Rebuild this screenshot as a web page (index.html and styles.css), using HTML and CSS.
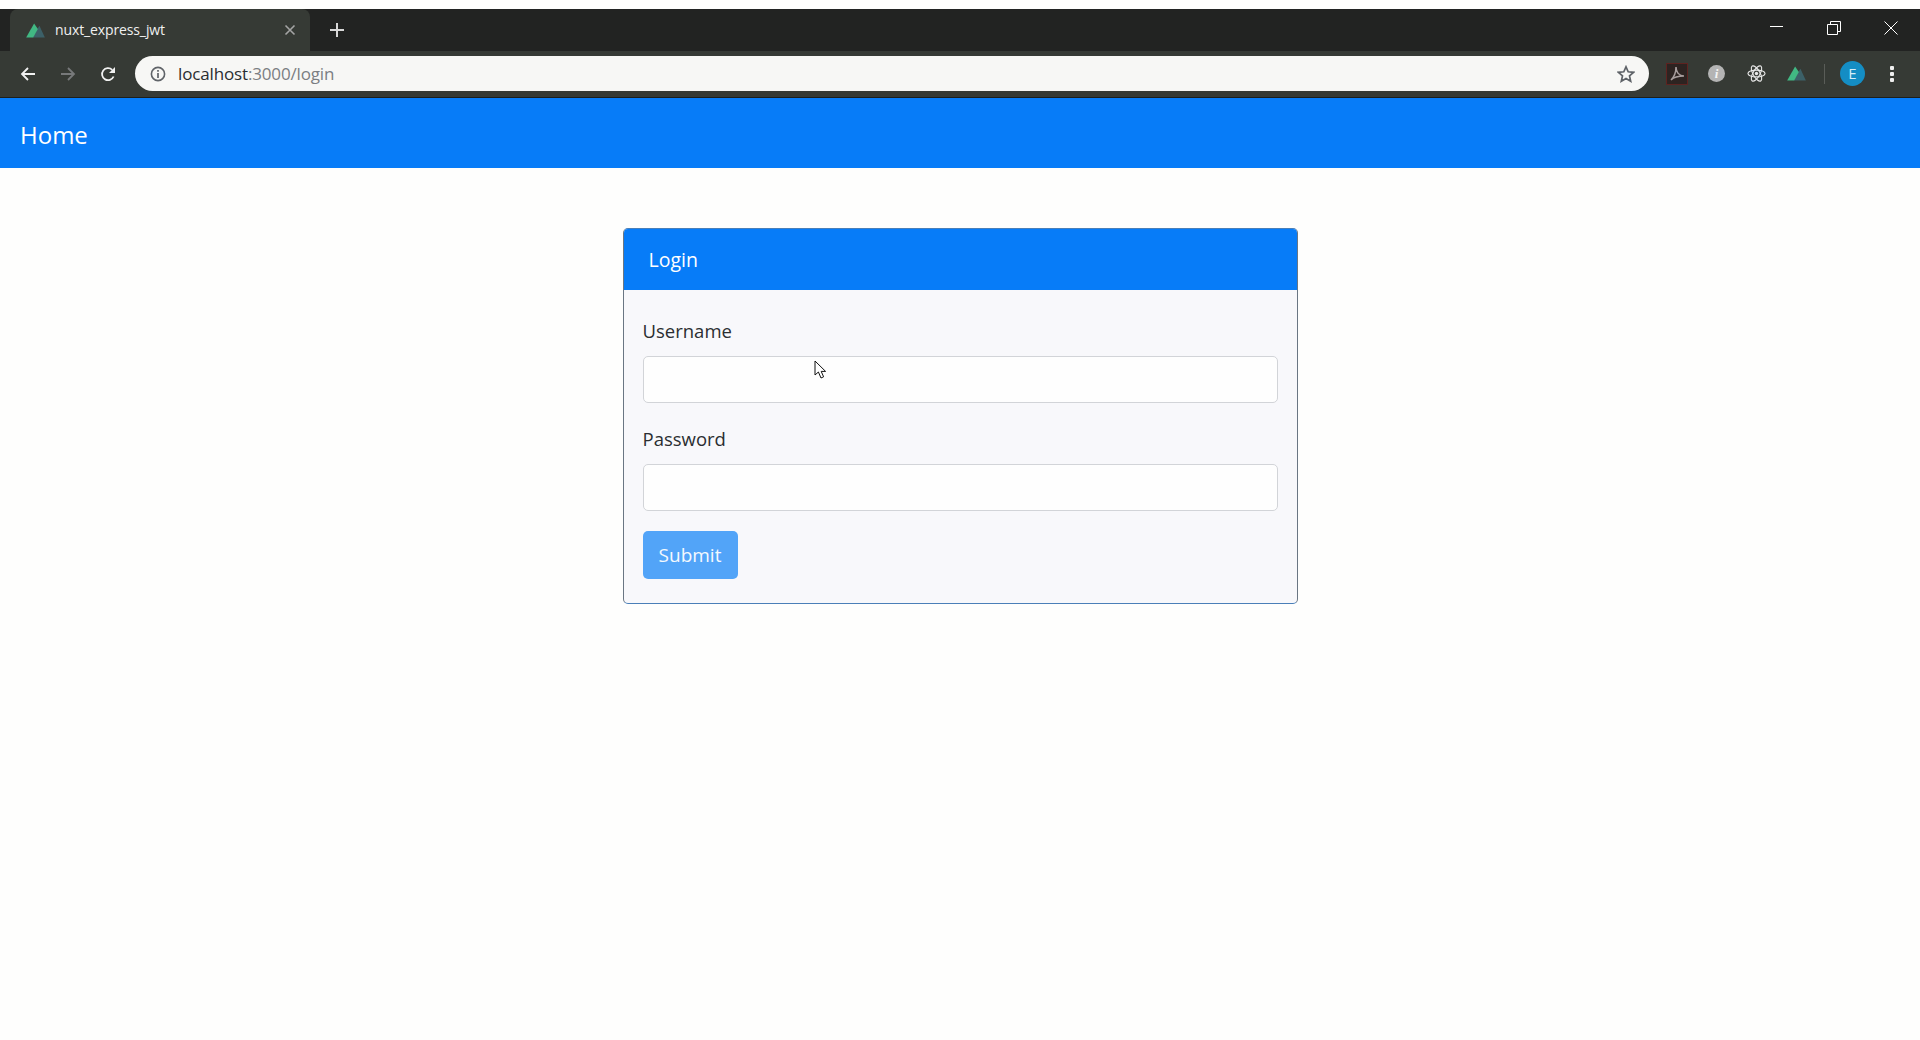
FILE: index.html
```html
<!DOCTYPE html>
<html lang="en">
<head>
    <meta charset="UTF-8">
    <title>nuxt_express_jwt</title>
    <link rel="stylesheet" href="styles.css">
</head>
<body>
    <!-- Browser window -->
    <div class="tabstrip">
        <div class="tab">
            <svg class="tab-logo" viewBox="0 0 20 16"><path d="M7 15.5 L12 6.5 L14.2 3 L20 15.5 Z" fill="#3c6068"/><path d="M0 15.5 L8.5 0.5 L12.5 6.5 L7.5 15.5 Z" fill="#41b883"/></svg>
            <span class="tab-title">nuxt_express_jwt</span>
            <svg class="tab-close" viewBox="0 0 12 12"><path d="M1.5 1.5 L10.5 10.5 M10.5 1.5 L1.5 10.5" stroke="#a4a4a4" stroke-width="1.6"/></svg>
        </div>
        <svg class="tab-new" viewBox="0 0 16 16"><path d="M8 1 V15 M1 8 H15" stroke="#d8d8d8" stroke-width="2"/></svg>
        <div class="win-controls">
            <svg class="win-icon" viewBox="0 0 14 14"><path d="M0 5.5 H13" stroke="#fff" stroke-width="1"/></svg>
            <svg class="win-icon" viewBox="0 0 14 14"><path d="M0.5 3.5 H10.5 V13.5 H0.5 Z M3.5 3.5 V0.5 H13.5 V10.5 H10.5" stroke="#fff" fill="none"/></svg>
            <svg class="win-icon" viewBox="0 0 14 14"><path d="M0.5 0.5 L13.5 13.5 M13.5 0.5 L0.5 13.5" stroke="#fff"/></svg>
        </div>
    </div>

    <div class="toolbar">
        <svg class="nav-icon" viewBox="0 0 16 16"><path d="M15 8 H2 M8 2 L2 8 L8 14" stroke="#f1f1f1" stroke-width="1.8" fill="none"/></svg>
        <svg class="nav-icon" viewBox="0 0 16 16"><path d="M1 8 H14 M8 2 L14 8 L8 14" stroke="#77797a" stroke-width="1.8" fill="none"/></svg>
        <svg class="nav-icon" viewBox="0 0 16 16"><path d="M13.6 10.5 A6 6 0 1 1 12.2 3.8" stroke="#f1f1f1" stroke-width="1.8" fill="none"/><path d="M15 1 V7 H9 Z" fill="#f1f1f1"/></svg>
        <div class="omnibox">
            <svg class="info-icon" viewBox="0 0 16 16"><circle cx="8" cy="8" r="6.6" stroke="#5f6368" stroke-width="1.6" fill="none"/><path d="M8 7 V12 M8 4 V5.8" stroke="#5f6368" stroke-width="1.7"/></svg>
            <span class="url">localhost<span class="url-path">:3000/login</span></span>
            <svg class="star-icon" viewBox="0 0 18 18"><path d="M9 1.8 L11.2 6.8 L16.6 7.3 L12.5 10.9 L13.7 16.2 L9 13.4 L4.3 16.2 L5.5 10.9 L1.4 7.3 L6.8 6.8 Z" stroke="#5f6368" stroke-width="1.7" fill="none"/></svg>
        </div>
        <div class="extensions">
            <div class="ext-pdf">
                <svg viewBox="0 0 20 20"><path d="M4 16 C7 13 9 8 9 3 C9 8 12 12 17 12 C12 12 7 13 4 16 Z" stroke="#a89d9d" stroke-width="1.5" fill="none"/></svg>
            </div>
            <div class="ext-info">i</div>
            <svg class="ext-icon" viewBox="0 0 20 20"><g stroke="#e8e8e8" stroke-width="1.2" fill="none"><ellipse cx="10" cy="10" rx="9" ry="3.6"/><ellipse cx="10" cy="10" rx="9" ry="3.6" transform="rotate(60 10 10)"/><ellipse cx="10" cy="10" rx="9" ry="3.6" transform="rotate(120 10 10)"/></g><circle cx="10" cy="10" r="1.8" fill="#e8e8e8"/></svg>
            <svg class="ext-nuxt" viewBox="0 0 20 16"><path d="M7 15.5 L12 6.5 L14.2 3 L20 15.5 Z" fill="#3c6068"/><path d="M0 15.5 L8.5 0.5 L12.5 6.5 L7.5 15.5 Z" fill="#41b883"/></svg>
            <div class="ext-sep"></div>
            <div class="avatar">E</div>
            <div class="kebab"><span></span><span></span><span></span></div>
        </div>
    </div>

    <!-- Page -->
    <div class="navbar">
        <a href="#" class="navbar-brand">Home</a>
    </div>

    <div class="content">
        <div class="card">
            <div class="card-header">Login</div>
            <form class="card-body">
                <div class="form-group">
                    <label for="username">Username</label>
                    <input type="text" id="username">
                </div>
                <div class="form-group">
                    <label for="password">Password</label>
                    <input type="password" id="password">
                </div>
                <button type="button" class="btn-submit">Submit</button>
            </form>
        </div>
    </div>

    <!-- Mouse pointer in the capture -->
    <svg class="cursor" viewBox="0 0 14 20"><path d="M1 1 V15 L4.4 12 L7 18 L9.6 16.8 L7.2 11.4 H11.6 Z" fill="#fff" stroke="#111" stroke-width="1"/></svg>
</body>
</html>
```

FILE: styles.css
```css
/* Base */
body {
    margin: 0;
    padding-top: 9px;
    height: 1040px;
    box-sizing: border-box;
    overflow: hidden;
    background: #fefefd;
    color: #2b2e31;
    font-family: 'Open Sans', 'Noto Sans', sans-serif;
    font-size: 18.5px;
}

/* Tab strip */
.tabstrip {
    height: 42px;
    background: #222322;
    display: flex;
    align-items: flex-start;
}

.tab {
    width: 300px;
    height: 42px;
    margin-left: 10px;
    padding: 0 14px 0 16px;
    box-sizing: border-box;
    background: #363a35;
    border-radius: 8px 8px 0 0;
    display: flex;
    align-items: center;
}

.tab-logo {
    width: 19px;
    height: 15px;
}

.tab-title {
    margin: -2px 0 0 10px;
    flex: 1;
    color: #f0f0f0;
    font-size: 14px;
    letter-spacing: -0.12px;
}

.tab-close {
    width: 12px;
    height: 12px;
}

.tab-new {
    width: 16px;
    height: 16px;
    margin: 13px 0 0 19px;
}

.win-controls {
    margin-left: auto;
    margin-right: 22px;
    display: flex;
    gap: 43px;
    padding-top: 12px;
}

.win-icon {
    width: 14px;
    height: 14px;
}

/* Toolbar */
.toolbar {
    height: 46px;
    background: #363a35;
    border-bottom: 1px solid #1d1f1c;
    display: flex;
    align-items: center;
    padding-left: 20px;
}

.nav-icon {
    width: 16px;
    height: 16px;
    margin-right: 24px;
}

.nav-icon:nth-child(3) {
    margin-right: 19px;
}

.omnibox {
    width: 1514px;
    height: 35px;
    margin-top: -1px;
    background: #f7f7f5;
    border-radius: 18px;
    display: flex;
    align-items: center;
    padding: 0 14px 0 15px;
    box-sizing: border-box;
}

.info-icon {
    width: 16px;
    height: 16px;
}

.url {
    margin-left: 12px;
    flex: 1;
    font-size: 17px;
    letter-spacing: -0.15px;
    color: #2a2d30;
}

.url-path {
    color: #7b7e82;
}

.star-icon {
    width: 18px;
    height: 18px;
}

.extensions {
    display: flex;
    align-items: center;
    margin-left: 17px;
    margin-top: -1px;
}

.ext-pdf {
    width: 22px;
    height: 22px;
    background: #2d2321;
    border: 1px solid #5e2320;
    box-sizing: border-box;
    display: flex;
}

.ext-info {
    width: 17px;
    height: 17px;
    margin-left: 20px;
    border-radius: 50%;
    background: #b4b4b4;
    color: #f4f4f4;
    font: italic bold 13px/17px 'Liberation Serif', serif;
    text-align: center;
}

.ext-icon {
    width: 19px;
    height: 19px;
    margin-left: 22px;
}

.ext-nuxt {
    width: 19px;
    height: 15px;
    margin-left: 21px;
}

.ext-sep {
    width: 1px;
    height: 20px;
    margin-left: 18px;
    background: #5a5d58;
}

.avatar {
    width: 25px;
    height: 25px;
    margin-left: 15px;
    border-radius: 50%;
    background: #148dc4;
    color: #d8eef8;
    font-size: 15px;
    line-height: 25px;
    text-align: center;
}

.kebab {
    margin-left: 25px;
    display: flex;
    flex-direction: column;
    gap: 2px;
}

.kebab span {
    width: 4px;
    height: 4px;
    background: #eee;
    border-radius: 1px;
}

/* Navbar */
.navbar {
    height: 70px;
    box-sizing: border-box;
    background: #077cf8;
    padding: 20px 20px 0;
}

.navbar-brand {
    color: #fff;
    font-size: 24px;
    line-height: 34px;
    text-decoration: none;
}

/* Card */
.content {
    display: flex;
    justify-content: center;
    padding-top: 60px;
}

.card {
    width: 675px;
    height: 376px;
    box-sizing: border-box;
    background: #f8f8fb;
    border: 1px solid #4a7fb8;
    border-left-color: #6a7683;
    border-right-color: #6a7683;
    border-radius: 5px;
    overflow: hidden;
}

.card-header {
    height: 61px;
    box-sizing: border-box;
    background: #077cf8;
    color: #fff;
    padding: 0 25px;
    font-size: 19.5px;
    line-height: 61px;
}

.card-body {
    display: block;
    padding: 26px 19px 0;
}

.form-group {
    margin-bottom: 20px;
}

label {
    display: block;
    line-height: 30px;
    margin-bottom: 10px;
}

.form-group + .form-group label {
    padding-top: 1px;
}

input {
    display: block;
    width: 100%;
    height: 47px;
    box-sizing: border-box;
    background: #fefefe;
    border: 1px solid #d2d4d8;
    border-radius: 5px;
}

.btn-submit {
    width: 95px;
    height: 48px;
    padding: 0;
    border: none;
    border-radius: 5px;
    background: #52a4f8;
    color: #f4f9fe;
    font-family: inherit;
    font-size: 19px;
}

/* Pointer */
.cursor {
    position: absolute;
    left: 814px;
    top: 360px;
    width: 14px;
    height: 20px;
}
```
